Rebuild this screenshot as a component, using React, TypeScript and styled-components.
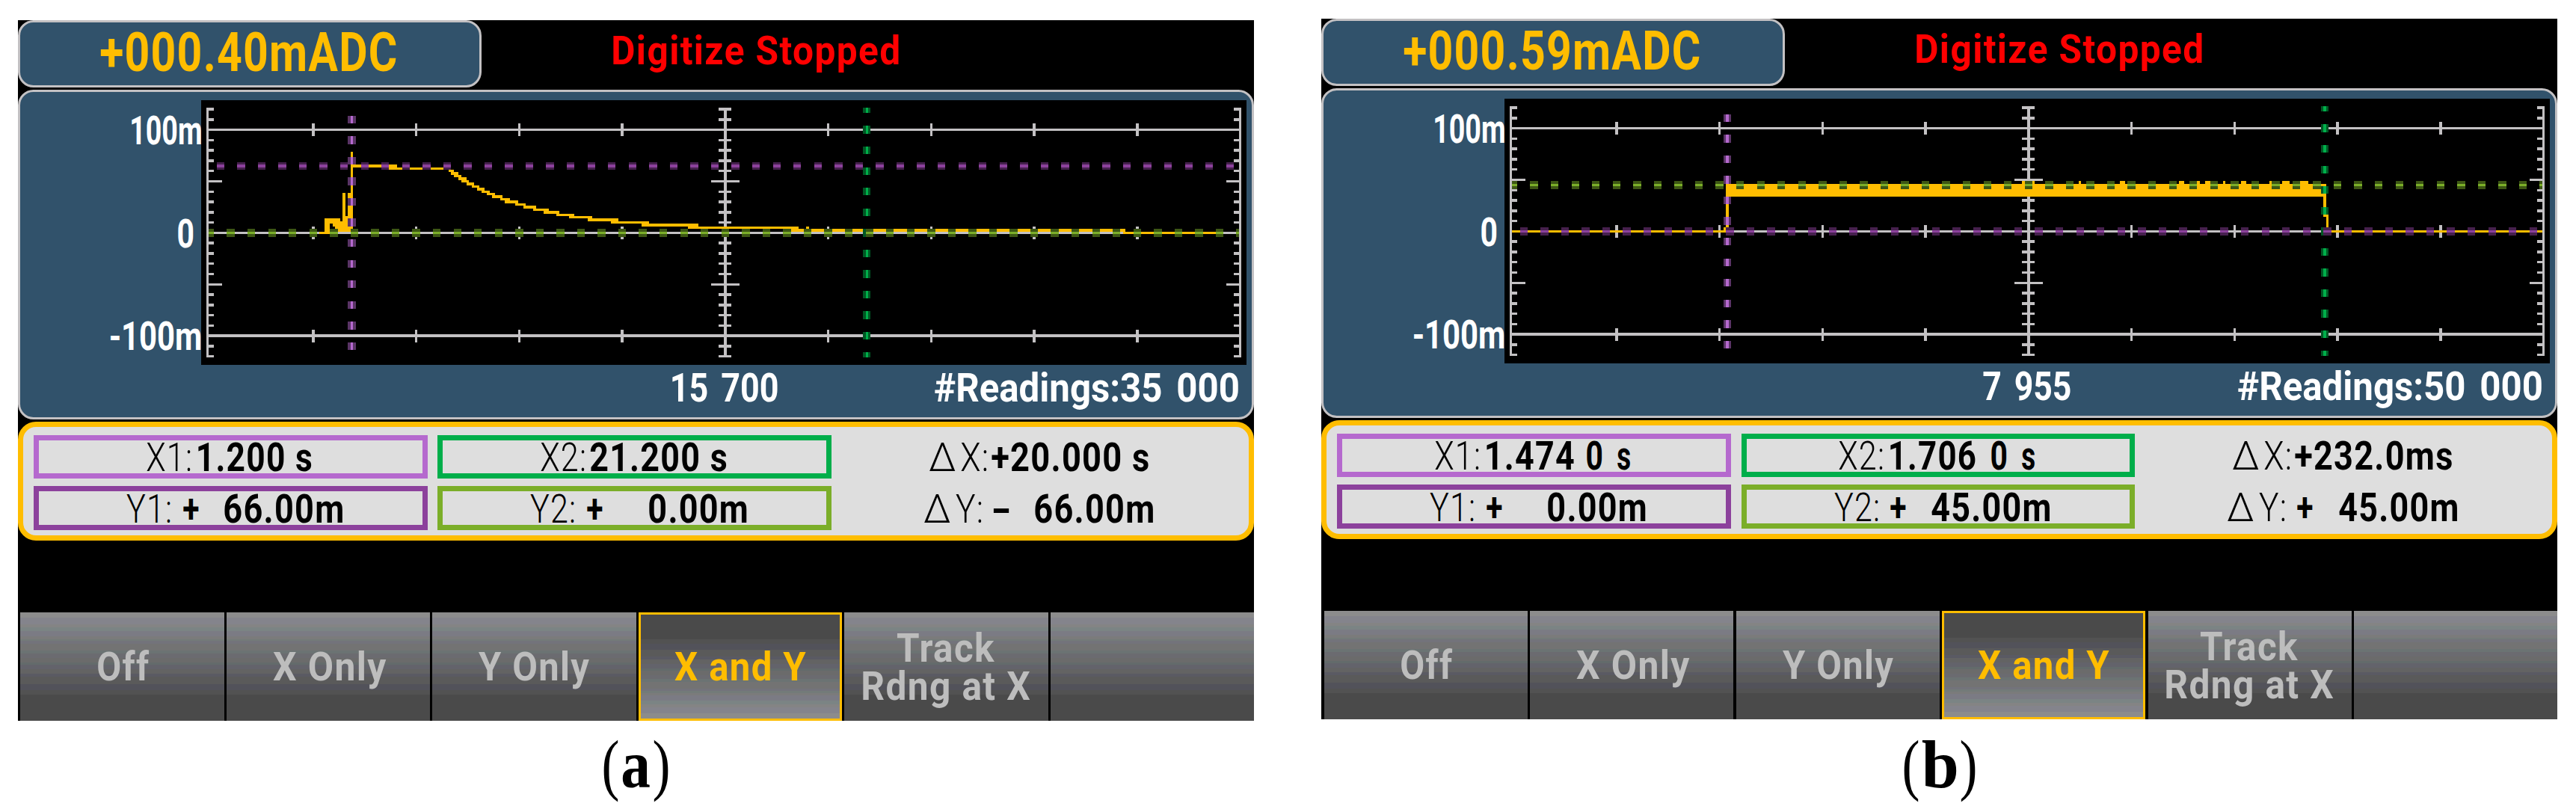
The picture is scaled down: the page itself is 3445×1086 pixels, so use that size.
import { useLayoutEffect, useRef } from "react";
import styled, { createGlobalStyle } from "styled-components";

// one LCD dot of the instrument display, in css pixels
const DOT = 3.444;
const u = (n: number) => `${n * DOT}px`;

const YELLOW = "#ffbd00";
const GRID = "#c3c1c3";
const LILAC = "#b569ce";
const PURPLE = "#8c419c";
const GREEN = "#00ae4a";
const OLIVE = "#7bae29";

type Rect = [number, number, number, number];

interface Segment {
  text: string;
  width: number;
  gap?: number;
  thin?: boolean;
}

interface CursorDots {
  color: string;
  dim: string;
  pos: number;
}

interface ScreenData {
  id: string;
  reading: string;
  center: string;
  centerWidth: number;
  centerLeft: number;
  readings: string;
  x1: Segment[];
  x2: Segment[];
  dx: Segment[];
  y1: Segment[];
  y2: Segment[];
  dy: Segment[];
  trace: Rect[];
  cursors: { x1: CursorDots; x2: CursorDots; y1: CursorDots; y2: CursorDots };
}

interface FitTextProps {
  text: string;
  width: number;
  className?: string;
}

// Squeezes the text to the given width, like the narrow face of the display
const FitText = (props: FitTextProps) => {
  const { text, width, className } = props;
  const ref = useRef<HTMLSpanElement>(null);

  useLayoutEffect(() => {
    const el = ref.current;
    const ctx = document.createElement("canvas").getContext("2d");
    if (!el || !ctx) return;
    const style = getComputedStyle(el);
    ctx.font = `${style.fontWeight} ${style.fontSize} ${style.fontFamily}`;
    ctx.letterSpacing = `${parseFloat(style.letterSpacing) || 0}px`;
    ctx.wordSpacing = `${parseFloat(style.wordSpacing) || 0}px`;
    const box = ctx.measureText(text);
    const scale =
      width / (box.actualBoundingBoxLeft + box.actualBoundingBoxRight);
    el.style.transform = `translateX(${
      box.actualBoundingBoxLeft * scale
    }px) scaleX(${scale})`;
  }, [text, width]);

  return (
    <FitTextStyled className={className} $width={width}>
      <span ref={ref}>{text}</span>
    </FitTextStyled>
  );
};

// x, y, width, height of the trace blocks in display dots
const traceA: Rect[] = [
  [117, 82, 4, 1], [119, 77, 2, 6], [119, 77, 6, 1], [119, 78, 7, 1],
  [122, 79, 8, 1], [123, 80, 7, 1], [124, 81, 6, 1], [126, 67, 1, 15],
  [127, 76, 1, 6], [128, 67, 2, 15], [129, 51, 1, 31],
  [129, 56, 18, 1], [144, 57, 24, 1], [167, 58, 2, 1], [168, 59, 3, 1],
  [169, 60, 3, 1], [171, 61, 3, 1], [172, 62, 3, 1], [174, 63, 3, 1],
  [176, 64, 3, 1], [178, 65, 3, 1], [180, 66, 3, 1], [182, 67, 3, 1],
  [184, 68, 4, 1], [187, 69, 4, 1], [189, 70, 5, 1], [193, 71, 4, 1],
  [196, 72, 5, 1], [200, 73, 6, 1], [204, 74, 6, 1], [209, 75, 7, 1],
  [214, 76, 9, 1], [221, 77, 12, 1], [230, 78, 15, 1], [242, 79, 22, 1],
  [260, 80, 43, 1], [306, 80, 1, 1], [300, 81, 130, 1], [429, 82, 37, 1],
];

const traceB: Rect[] = [
  [74, 82, 84, 1], [156, 81, 2, 1], [157, 64, 1, 18], [157, 64, 233, 5],
  [272, 63, 5, 1], [294, 63, 1, 1], [310, 63, 2, 1], [333, 63, 2, 1],
  [340, 63, 1, 1], [343, 63, 2, 1], [350, 63, 1, 1], [357, 63, 2, 1],
  [368, 63, 1, 1], [373, 63, 3, 1], [380, 63, 3, 1], [389, 68, 1, 9],
  [389, 76, 2, 1], [390, 76, 1, 7], [390, 82, 84, 1],
];

const screens: ScreenData[] = [
  {
    id: "a",
    reading: "+000.40mADC",
    center: "15 700",
    centerLeft: 254,
    centerWidth: 41,
    readings: "#Readings:35 000",
    x1: [
      { text: "X1:", gap: 44, width: 17, thin: true },
      { text: "1.200 s", gap: 3, width: 44 },
    ],
    x2: [
      { text: "X2:", gap: 40, width: 17, thin: true },
      { text: "21.200 s", gap: 2, width: 53 },
    ],
    dx: [
      { text: "Δ", gap: 34, width: 10, thin: true },
      { text: "X:", gap: 2, width: 10, thin: true },
      { text: "+20.000 s", gap: 2, width: 61 },
    ],
    y1: [
      { text: "Y1:", gap: 36, width: 17, thin: true },
      { text: "+", gap: 5, width: 6 },
      { text: "66.00m", gap: 10, width: 46 },
    ],
    y2: [
      { text: "Y2:", gap: 36, width: 17, thin: true },
      { text: "+", gap: 5, width: 6 },
      { text: "0.00m", gap: 18, width: 38 },
    ],
    dy: [
      { text: "Δ", gap: 32, width: 10, thin: true },
      { text: "Y:", gap: 2, width: 10, thin: true },
      { text: "-", gap: 5, width: 6 },
      { text: "66.00m", gap: 10, width: 46 },
    ],
    trace: traceA,
    cursors: {
      x1: { color: LILAC, dim: "#5a3466", pos: 128 },
      x2: { color: GREEN, dim: "#005724", pos: 328 },
      y1: { color: PURPLE, dim: "#46204e", pos: 55 },
      y2: { color: OLIVE, dim: "#3d5714", pos: 81 },
    },
  },
  {
    id: "b",
    reading: "+000.59mADC",
    center: "7 955",
    centerLeft: 257,
    centerWidth: 34,
    readings: "#Readings:50 000",
    x1: [
      { text: "X1:", gap: 38, width: 17, thin: true },
      { text: "1.474", gap: 3, width: 34 },
      { text: "0", gap: 5, width: 6 },
      { text: "s", gap: 6, width: 5 },
    ],
    x2: [
      { text: "X2:", gap: 38, width: 17, thin: true },
      { text: "1.706", gap: 3, width: 33 },
      { text: "0", gap: 6, width: 6 },
      { text: "s", gap: 6, width: 5 },
    ],
    dx: [
      { text: "Δ", gap: 34, width: 10, thin: true },
      { text: "X:", gap: 2, width: 10, thin: true },
      { text: "+232.0ms", gap: 2, width: 61 },
    ],
    y1: [
      { text: "Y1:", gap: 36, width: 17, thin: true },
      { text: "+", gap: 5, width: 6 },
      { text: "0.00m", gap: 18, width: 38 },
    ],
    y2: [
      { text: "Y2:", gap: 36, width: 17, thin: true },
      { text: "+", gap: 5, width: 6 },
      { text: "45.00m", gap: 10, width: 46 },
    ],
    dy: [
      { text: "Δ", gap: 32, width: 10, thin: true },
      { text: "Y:", gap: 2, width: 10, thin: true },
      { text: "+", gap: 5, width: 6 },
      { text: "45.00m", gap: 10, width: 46 },
    ],
    trace: traceB,
    cursors: {
      x1: { color: LILAC, dim: "#5a3466", pos: 156 },
      x2: { color: GREEN, dim: "#005724", pos: 388 },
      y1: { color: PURPLE, dim: "#46204e", pos: 81 },
      y2: { color: OLIVE, dim: "#3d5714", pos: 63 },
    },
  },
];

const softKeys = [
  [{ text: "Off", width: 20 }],
  [{ text: "X Only", width: 44 }],
  [{ text: "Y Only", width: 43 }],
  [{ text: "X and Y", width: 51 }],
  [
    { text: "Track", width: 38 },
    { text: "Rdng at X", width: 65 },
  ],
  [],
];

// 16 bit colour bands of the soft keys: colour and where the band ends
const keyBands: [string, number][] = [
  ["#8c8c8c", 5],
  ["#84848c", 11],
  ["#848484", 14],
  ["#7b8484", 17],
  ["#7b7b84", 22],
  ["#7b7b7b", 24.5],
  ["#737b79", 26.5],
  ["#73737b", 29],
  ["#737373", 35.5],
  ["#6b7373", 38],
  ["#6b6b70", 42],
  ["#6b6b6b", 46],
  ["#636b6b", 48.5],
  ["#63636b", 52.5],
  ["#636363", 56.5],
  ["#5a5a63", 59.5],
  ["#5a5a5a", 66.5],
  ["#52525a", 72],
  ["#525252", 76],
  ["#4a4a4a", 100],
];

const bandStops = keyBands
  .map(([color, end], index) => {
    const start = index === 0 ? 0 : keyBands[index - 1][1];
    return `${color} ${start}% ${end}%`;
  })
  .join(", ");

const range = (from: number, to: number, step: number) => {
  const list: number[] = [];
  for (let i = from; i <= to; i += step) list.push(i);
  return list;
};

const Grid = () => (
  <g fill={GRID}>
    {[42, 82, 122].map((y) => (
      <g key={y}>
        <rect x={74} y={y} width={400} height={1} />
        {range(114, 434, 40).map((x) => (
          <rect key={x} x={x} y={y - 2} width={1} height={5} />
        ))}
      </g>
    ))}
    <rect x={73} y={34} width={1} height={97} />
    <rect x={274} y={34} width={1} height={97} />
    <rect x={474} y={34} width={1} height={97} />
    {range(34, 130, 4).map((y) => {
      const major = y === 62 || y === 102;
      if (y === 82) return null;
      return (
        <g key={y}>
          <rect x={73} y={y} width={major ? 6 : 3} height={1} />
          <rect
            x={major ? 269 : 272}
            y={y}
            width={major ? 11 : 5}
            height={1}
          />
          <rect
            x={major ? 469 : 472}
            y={y}
            width={major ? 6 : 3}
            height={1}
          />
        </g>
      );
    })}
  </g>
);

interface DotsProps extends CursorDots {
  start: number;
  end: number;
  min: number;
}

const VerticalCursor = (props: DotsProps) => (
  <>
    {range(props.start, props.end, 8).map((y) => {
      const top = Math.max(y, props.min);
      const height = Math.min(y + 3, 131) - top;
      return (
        <g key={y}>
          <rect
            x={props.pos}
            y={top}
            width={3}
            height={height}
            fill={props.dim}
          />
          <rect
            x={props.pos + 1}
            y={top}
            width={1}
            height={height}
            fill={props.color}
          />
        </g>
      );
    })}
  </>
);

const HorizontalCursor = (props: DotsProps) => (
  <>
    {range(props.start, props.end, 8).map((x) => {
      const left = Math.max(x, props.min);
      const width = Math.min(x + 3, 474) - left;
      return (
        <g key={x}>
          <rect
            x={left}
            y={props.pos}
            width={width}
            height={3}
            fill={props.dim}
          />
          <rect
            x={left}
            y={props.pos + 1}
            width={width}
            height={1}
            fill={props.color}
          />
        </g>
      );
    })}
  </>
);

const Plot = ({ data }: { data: ScreenData }) => {
  const { x1, x2, y1, y2 } = data.cursors;
  return (
    <PlotStyled viewBox="71 31 406 103" shapeRendering="crispEdges">
      <Grid />
      <g fill={YELLOW}>
        {data.trace.map(([x, y, w, h], index) => (
          <rect key={index} x={x} y={y} width={w} height={h} />
        ))}
      </g>
      <VerticalCursor {...x1} start={37} end={125} min={34} />
      <VerticalCursor {...x2} start={33} end={129} min={34} />
      <HorizontalCursor {...y1} start={77} end={469} min={74} />
      <HorizontalCursor {...y2} start={73} end={473} min={74} />
    </PlotStyled>
  );
};

const Cell = ({ items, color }: { items: Segment[]; color?: string }) => (
  <CellStyled $color={color}>
    {items.map((item, index) => (
      <SegmentStyled key={index} $gap={item.gap || 0} $thin={item.thin}>
        <FitText text={item.text} width={item.width * DOT} />
      </SegmentStyled>
    ))}
  </CellStyled>
);

const Screen = ({ data }: { data: ScreenData }) => (
  <ScreenStyled>
    <TopBar>
      <Reading>
        <FitText text={data.reading} width={115 * DOT} />
      </Reading>
      <Status>
        <FitText text="Digitize Stopped" width={111 * DOT} />
      </Status>
    </TopBar>
    <ChartPanel>
      <ChartRow>
        <AxisLabels>
          <AxisLabel $top={6} $right={0}>
            <FitText text="100m" width={27 * DOT} />
          </AxisLabel>
          <AxisLabel $top={29} $right={3}>
            <FitText text="0" width={6 * DOT} />
          </AxisLabel>
          <AxisLabel $top={29} $right={0}>
            <FitText text="-100m" width={35 * DOT} />
          </AxisLabel>
        </AxisLabels>
        <Plot data={data} />
      </ChartRow>
      <ChartFooter $left={data.centerLeft - 1}>
        <FitText text={data.center} width={data.centerWidth * DOT} />
        <FitText text={data.readings} width={118 * DOT} />
      </ChartFooter>
    </ChartPanel>
    <CursorPanel>
      <Cell items={data.x1} color={LILAC} />
      <Cell items={data.x2} color={GREEN} />
      <Cell items={data.dx} />
      <Cell items={data.y1} color={PURPLE} />
      <Cell items={data.y2} color={OLIVE} />
      <Cell items={data.dy} />
    </CursorPanel>
    <SoftKeys>
      {softKeys.map((lines, index) => (
        <SoftKey key={index} $active={index === 3}>
          {lines.map((line) => (
            <FitText
              key={line.text}
              text={line.text}
              width={line.width * DOT}
            />
          ))}
        </SoftKey>
      ))}
    </SoftKeys>
  </ScreenStyled>
);

const App = () => {
  return (
    <>
      <GlobalStyle />
      <PageStyled>
        {screens.map((data) => (
          <FigureStyled key={data.id} $second={data.id === "b"}>
            <Screen data={data} />
            <Caption $second={data.id === "b"}>
              <FitText text="(" width={20} />
              <b>
                <FitText text={data.id} width={data.id === "b" ? 46 : 37} />
              </b>
              <FitText text=")" width={20} />
            </Caption>
          </FigureStyled>
        ))}
      </PageStyled>
    </>
  );
};

export default App;

const GlobalStyle = createGlobalStyle`
  body {
    margin: 0;
    background: #fff;
  }

  * {
    box-sizing: border-box;
  }
`;

const PageStyled = styled.main`
  display: flex;
  gap: 90px;
  width: 3445px;
  height: 1086px;
  padding-left: 24px;
  overflow: hidden;
`;

const FigureStyled = styled.figure<{ $second: boolean }>`
  display: flex;
  flex-direction: column;
  align-items: center;
  margin: 0;
  padding-top: ${(props) => (props.$second ? 25 : 27)}px;
`;

const FitTextStyled = styled.span<{ $width: number }>`
  display: block;
  flex: none;
  width: ${(props) => props.$width}px;
  white-space: pre;

  span {
    display: inline-block;
    transform-origin: 0 50%;
  }
`;

const ScreenStyled = styled.div`
  width: ${u(480)};
  height: ${u(272)};
  background: #000;
  color: #fff;
  font-family: Roboto, "Liberation Sans", sans-serif;
  font-size: ${u(15.5)};
  font-weight: 700;
  line-height: ${u(11)};
  letter-spacing: 1.5px;
`;

const TopBar = styled.div`
  display: flex;
  height: ${u(27)};
`;

const Reading = styled.div`
  width: ${u(180)};
  height: ${u(26)};
  padding: ${u(4.5)} 0 0 ${u(31.1)};
  border: 3px solid ${GRID};
  border-radius: ${u(6)};
  background: #31526b;
  color: ${YELLOW};
  font-size: ${u(21.1)};
  line-height: ${u(15)};
`;

const Status = styled.div`
  padding: ${u(6.3)} 0 0 ${u(51)};
  color: #f00;
`;

const ChartPanel = styled.div`
  height: ${u(128)};
  padding: ${u(3.13)} 0 0 ${u(0.13)};
  border: 3px solid ${GRID};
  border-radius: ${u(6)};
  background: #31526b;
`;

const ChartRow = styled.div`
  display: flex;
`;

const AxisLabels = styled.div`
  display: flex;
  flex-direction: column;
  align-items: flex-end;
  width: ${u(70)};
  padding-top: ${u(0.4)};
  letter-spacing: 0;
`;

const AxisLabel = styled.div<{ $top: number; $right: number }>`
  padding: ${(props) => u(props.$top)} ${(props) => u(props.$right)} 0 0;
`;

const PlotStyled = styled.svg`
  display: block;
  width: ${u(406)};
  height: ${u(103)};
  background: #000;
`;

const ChartFooter = styled.div<{ $left: number }>`
  display: flex;
  justify-content: space-between;
  padding: ${u(3.4)} ${u(5.13)} 0 ${(props) => u(props.$left)};
  letter-spacing: 0;
  word-spacing: 7px;
`;

const CursorPanel = styled.div`
  display: grid;
  grid-template-columns: repeat(3, ${u(153)});
  grid-auto-rows: ${u(17)};
  gap: ${u(3)} ${u(4)};
  height: ${u(46)};
  margin-top: ${u(1)};
  padding: ${u(3)} ${u(4)};
  border: 7px solid ${YELLOW};
  border-radius: ${u(7)};
  background: #dedede;
  color: #000;
`;

const CellStyled = styled.div<{ $color?: string }>`
  display: flex;
  align-items: center;
  padding-top: 2px;
  border: 7px solid ${(props) => props.$color || "transparent"};

  & > :first-child {
    margin-left: -7px;
  }
`;

const SegmentStyled = styled.div<{ $gap: number; $thin?: boolean }>`
  padding-left: ${(props) => u(props.$gap)};
  font-weight: ${(props) => (props.$thin ? 300 : 700)};
`;

const SoftKeys = styled.div`
  display: grid;
  grid-template-columns: repeat(6, ${u(79)});
  gap: ${u(1)};
  height: ${u(42)};
  margin-top: ${u(28)};
  padding-left: ${u(1)};
`;

const SoftKey = styled.div<{ $active: boolean }>`
  display: flex;
  flex-direction: column;
  align-items: center;
  justify-content: center;
  gap: ${u(4)};
  padding-top: 2px;
  border: ${(props) => (props.$active ? `3px solid ${YELLOW}` : "0")};
  background: linear-gradient(
    ${(props) => (props.$active ? "to top" : "to bottom")},
    ${bandStops}
  );
  color: ${(props) => (props.$active ? YELLOW : "#bdbdbd")};

  &:nth-child(-n + 2) {
    padding-left: ${u(1)};
  }
`;

const Caption = styled.figcaption<{ $second: boolean }>`
  display: flex;
  gap: 5px;
  padding-top: ${(props) => (props.$second ? 11 : 9)}px;
  color: #000;
  font-family: "Liberation Serif", serif;
  font-size: 90px;
  line-height: 100px;
`;
